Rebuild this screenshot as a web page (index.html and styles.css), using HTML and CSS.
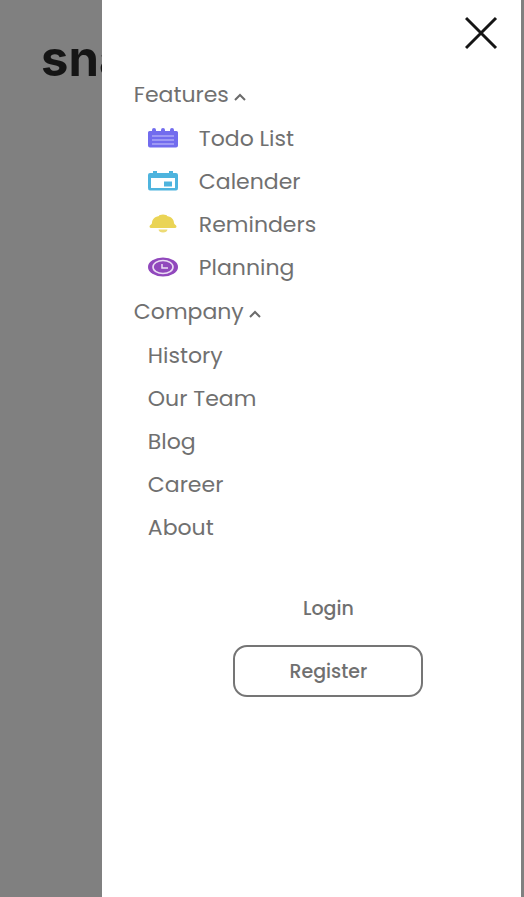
FILE: index.html
```html
<!DOCTYPE html>
<html lang="en">
<head>
<meta charset="utf-8">
<meta name="viewport" content="width=device-width, initial-scale=1">
<title>sna</title>
<link rel="stylesheet" href="styles.css">
</head>
<body>
<header class="page-header"><span class="logo">sna</span></header>
<aside class="drawer">
  <div class="drawer-top">
    <button class="close" type="button" aria-label="Close menu">
      <svg width="34" height="34" viewBox="0 0 34 34"><path d="M1 2 31 32M31 2 1 32"/></svg>
    </button>
  </div>
  <nav class="menu">
    <button class="group" type="button" aria-expanded="true">Features
      <svg class="caret" width="12" height="8" viewBox="0 0 12 8"><path d="M1 7 6 2l5 5"/></svg>
    </button>
    <ul class="list">
      <li><a class="item" href="#todo">
        <svg class="icon" width="30" height="22" viewBox="0 0 30 22"><path fill="#726cee" d="M1.500 3H4V2q0-2 2-2t2 2v1h5V2q0-2 2-2t2 2v1h5V2q0-2 2-2t2 2v1h2.500Q30 3 30 4.500v13q0 2-2 2H2q-2 0-2-2v-13Q0 3 1.500 3Z"/><path stroke="#c9c6fa" stroke-width="1.200" d="M4 8h22M4 12h22M4 16h22"/></svg>
        Todo List</a></li>
      <li><a class="item" href="#calendar">
        <svg class="icon" width="30" height="22" viewBox="0 0 30 22"><path fill="#4eb4de" fill-rule="evenodd" d="M2 2h3V0h4v2h12V0h4v2h3q2 0 2 2v13q0 2.500-2 2.500H2q-2 0-2-2.500V4q0-2 2-2ZM3 7v10h24V7Z"/><path fill="#4eb4de" d="M16 10.500h8v5h-8z"/></svg>
        Calender</a></li>
      <li><a class="item" href="#reminders">
        <svg class="icon" width="30" height="22" viewBox="0 0 30 22"><path fill="#ead455" d="M11 2q0-1.500 4-1.500t4 1.500c5 1 7 4 7 7 0 1.500 2.500 2 2.500 3.500 0 1-1 1.500-2.500 1.500H4c-1.500 0-2.500-.500-2.500-1.500C1.500 11 4 10.500 4 9c0-3 2-6 7-7Z"/><path fill="#eddb75" d="M10.500 15.500h9q-.500 3-4.500 3t-4.500-3Z"/></svg>
        Reminders</a></li>
      <li><a class="item" href="#planning">
        <svg class="icon" width="30" height="22" viewBox="0 0 30 22"><ellipse cx="15" cy="10" rx="15" ry="9.500" fill="#9148bd"/><ellipse cx="15" cy="10" rx="10" ry="6.500" fill="none" stroke="#eadcf3" stroke-width="1.600"/><path fill="none" stroke="#eadcf3" stroke-width="1.500" d="M14 7v4h6"/></svg>
        Planning</a></li>
    </ul>
    <button class="group" type="button" aria-expanded="true">Company
      <svg class="caret" width="12" height="8" viewBox="0 0 12 8"><path d="M1 7 6 2l5 5"/></svg>
    </button>
    <ul class="list">
      <li><a class="item" href="#history">History</a></li>
      <li><a class="item" href="#team">Our Team</a></li>
      <li><a class="item" href="#blog">Blog</a></li>
      <li><a class="item" href="#career">Career</a></li>
      <li><a class="item" href="#about">About</a></li>
    </ul>
  </nav>
  <div class="account">
    <a class="login" href="#login">Login</a>
    <button class="register" type="button">Register</button>
  </div>
</aside>
</body>
</html>
```
FILE: styles.css
```css
* {
  box-sizing: border-box;
}

body {
  margin: 0;
  min-height: 100vh;
  background: #808080;
  color: #707070;
  font-family: Poppins, Inter, sans-serif;
  font-size: 22px;
}

button {
  padding: 0;
  border: 0;
  background: none;
  color: inherit;
  font: inherit;
  cursor: pointer;
}

a {
  color: inherit;
  text-decoration: none;
}

.page-header {
  padding: 28px 41px;
}

.logo {
  color: #151515;
  font-family: Inter, sans-serif;
  font-size: 49px;
  font-weight: 700;
  line-height: 62px;
}

/* Slide-in menu that covers the dimmed page */
.drawer {
  position: fixed;
  top: 0;
  right: 3px;
  bottom: 0;
  width: 80%;
  padding: 16px 22px 16px 32px;
  overflow-y: auto;
  background: #fff;
}

.drawer-top {
  display: flex;
  justify-content: flex-end;
}

.close,
.close svg {
  display: block;
}

.close path {
  stroke: #151515;
  stroke-width: 3;
}

.menu {
  margin-top: 23px;
}

.group {
  display: flex;
  align-items: center;
  gap: 5px;
  height: 43px;
}

.caret {
  margin-top: 5px;
}

.caret path {
  fill: none;
  stroke: #6b6b6b;
  stroke-width: 2;
}

.list {
  margin: 0;
  padding: 1px 0 1px 14px;
  list-style: none;
}

.item {
  display: flex;
  align-items: center;
  gap: 21px;
  height: 43px;
}

.account {
  display: flex;
  flex-direction: column;
  align-items: center;
  gap: 20px;
  margin-top: 43px;
  padding-left: 24px;
  font-size: 19px;
  font-weight: 500;
}

.login {
  line-height: 32px;
}

.register {
  width: 190px;
  height: 52px;
  border: 2px solid #757575;
  border-radius: 14px;
}
```
